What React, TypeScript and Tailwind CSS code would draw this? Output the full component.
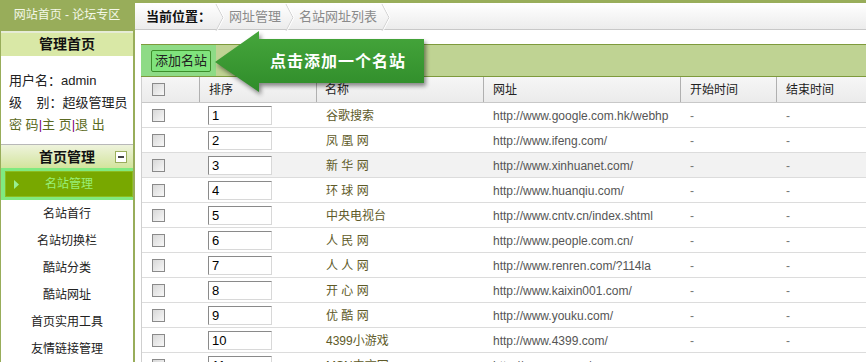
const sites = [
  { id: "1", name: "谷歌搜索", url: "http://www.google.com.hk/webhp" },
  { id: "2", name: "凤 凰 网", url: "http://www.ifeng.com/" },
  { id: "3", name: "新 华 网", url: "http://www.xinhuanet.com/" },
  { id: "4", name: "环 球 网", url: "http://www.huanqiu.com/" },
  { id: "5", name: "中央电视台", url: "http://www.cntv.cn/index.shtml" },
  { id: "6", name: "人 民 网", url: "http://www.people.com.cn/" },
  { id: "7", name: "人 人 网", url: "http://www.renren.com/?114la" },
  { id: "8", name: "开 心 网", url: "http://www.kaixin001.com/" },
  { id: "9", name: "优 酷 网", url: "http://www.youku.com/" },
  { id: "10", name: "4399小游戏", url: "http://www.4399.com/" },
  { id: "11", name: "MSN中文网", url: "http://cn.msn.com/" },
];

const menu = ["名站首行", "名站切换栏", "酷站分类", "酷站网址", "首页实用工具", "友情链接管理"];

const Chevron = () => (
  <svg width="10" height="27" viewBox="0 0 10 27" className="mx-[4px] shrink-0">
    <polyline points="1,0 8,13.5 1,27" fill="none" stroke="#d0d0d0" strokeWidth="1" />
    <polyline points="2,0 9,13.5 2,27" fill="none" stroke="#ffffff" strokeWidth="1" />
  </svg>
);

const Checkbox = () => (
  <span className="block w-[13px] h-[13px] border border-[#8a8a8a] bg-linear-to-br from-[#d8d8d8] to-[#f8f8f8]" />
);

const Sidebar = () => (
  <div className="w-[135px] shrink-0 border-r-2 border-l border-[#98ad5a] flex flex-col bg-white">
    <div className="h-[31px] bg-[#98ad5a] text-[#f4f8e8] text-[12px] leading-[31px] text-center">
      网站首页 - 论坛专区
    </div>
    <div className="h-[2px] bg-[#e6ecd6]" />
    <div className="h-[23px] bg-[#d9e8a6] text-[14px] font-bold text-[#111] leading-[23px] text-center">
      管理首页
    </div>
    <div className="pl-[8px] pt-[14px] h-[88px] text-[13px] leading-[22px] text-[#222]">
      <div>用户名：admin</div>
      <div>级&nbsp;&nbsp;&nbsp;&nbsp;别：超级管理员</div>
      <div className="text-[#5b6a22]">
        密 码<span className="text-[#800080]">|</span>主 页<span className="text-[#800080]">|</span>退 出
      </div>
    </div>
    <div className="border-t border-[#b8b8b8] h-[24px] bg-linear-to-b from-[#eef3dc] to-[#d3e49c] relative flex items-center justify-center">
      <span className="text-[14px] font-bold text-[#111] leading-none">首页管理</span>
      <span className="absolute right-[6px] top-[6px] w-[12px] h-[12px] bg-white border border-[#9aae5c] flex items-center justify-center">
        <span className="block w-[6px] h-[2px] bg-[#444]" />
      </span>
    </div>
    <div className="h-[32px] bg-[#80ea80] pt-[3px] pb-[3px] pl-[4px]">
      <div className="h-full bg-[#78a800] border border-[#8cbc20] flex items-center relative">
        <svg width="5" height="9" viewBox="0 0 5 9" className="absolute left-[8px] top-[8px]">
          <polygon points="0,0 5,4.5 0,9" fill="#98f090" />
        </svg>
        <span className="w-full text-center text-[12px] text-[#98f078]">名站管理</span>
      </div>
    </div>
    {menu.map((item) => (
      <div key={item} className="h-[27px] flex items-center justify-center text-[12px] text-[#222]">
        {item}
      </div>
    ))}
  </div>
);

const App = () => {
  return (
    <div
      className="relative w-[866px] h-[362px] overflow-hidden flex bg-white"
      style={{ fontFamily: '"Liberation Sans", "Noto Sans CJK SC", sans-serif' }}
    >
      <Sidebar />
      <div className="flex-1 min-w-0 flex flex-col">
        {/* breadcrumb */}
        <div className="h-[30px] border-t-[3px] border-[#98ad5a] border-b border-b-[#c8c8c8] bg-linear-to-b from-white to-[#ececec] flex items-center pl-[11px] text-[13px] pt-[2px]">
          <span className="font-bold text-[#111]">当前位置：</span>
          <Chevron />
          <span className="text-[#8a8a8a]">网址管理</span>
          <Chevron />
          <span className="text-[#8a8a8a]">名站网址列表</span>
          <Chevron />
        </div>

        <div className="pl-[6px] pt-[14px] flex flex-col">
          {/* toolbar */}
          <div className="h-[33px] border-y border-[#7e9a3c] bg-[#bfd393] flex">
            <div className="w-[75px] bg-[#8edb86] flex items-center pl-[10px]">
              <button className="h-[22px] px-[3px] bg-[#80e47c] border border-[#3d8f2b] rounded-[2px] text-[13px] text-[#222] leading-none">
                添加名站
              </button>
            </div>
          </div>

          {/* table */}
          <div className="border-l border-[#cfcfcf] text-[12px]">
            <div className="grid grid-cols-[58px_117px_167px_197px_96px_1fr] h-[26px] bg-linear-to-b from-[#f6f6f6] to-[#ebebeb] border-b border-[#c8c8c8] text-[#222]">
              <div className="flex items-center pl-[10px] border-r border-[#b0b0b0]">
                <Checkbox />
              </div>
              <div className="flex items-center pl-[9px] border-r border-[#b0b0b0]">排序</div>
              <div className="flex items-center pl-[8px] border-r border-[#b0b0b0]">名称</div>
              <div className="flex items-center pl-[9px] border-r border-[#b0b0b0]">网址</div>
              <div className="flex items-center pl-[9px] border-r border-[#b0b0b0]">开始时间</div>
              <div className="flex items-center pl-[9px]">结束时间</div>
            </div>
            {sites.map((site, i) => (
              <div
                key={site.id}
                className={`grid grid-cols-[58px_117px_167px_197px_96px_1fr] h-[25px] border-b border-[#dcdcdc] ${
                  i === 2 ? "bg-[#f2f2f2]" : "bg-white"
                }`}
              >
                <div className="flex items-center pl-[10px] pt-[1px]">
                  <Checkbox />
                </div>
                <div className="flex items-center pl-[8px] pt-[1px]">
                  <input
                    readOnly
                    value={site.id}
                    className="w-[64px] h-[19px] border border-t-[#8a8a8a] border-l-[#8a8a8a] border-r-[#d8d8d8] border-b-[#d8d8d8] bg-white px-[3px] text-[13px] text-black outline-none"
                  />
                </div>
                <div className="flex items-center pl-[9px] pt-[2px] text-[#5e5a28]">{site.name}</div>
                <div className="flex items-center pl-[9px] pt-[2px] text-[#555]">{site.url}</div>
                <div className="flex items-center pl-[9px] pt-[2px] text-[#777]">-</div>
                <div className="flex items-center pl-[9px] pt-[2px] text-[#777]">-</div>
              </div>
            ))}
          </div>
        </div>
      </div>

      {/* callout arrow */}
      <div className="absolute left-[212px] top-[28px] w-[220px] h-[70px]">
        <svg
          width="220"
          height="70"
          viewBox="0 0 220 70"
          className="absolute inset-0 drop-shadow-[2px_3px_2px_rgba(0,0,0,0.45)]"
        >
          <defs>
            <linearGradient id="arrowFill" x1="0" y1="0" x2="0" y2="1">
              <stop offset="0" stopColor="#46a63c" />
              <stop offset="1" stopColor="#2f8c2a" />
            </linearGradient>
          </defs>
          <polygon points="3,34 47,3 47,11 212,11 212,55 47,55 47,64" fill="url(#arrowFill)" />
        </svg>
        <span className="absolute left-[58px] top-[23px] text-[16px] leading-[22px] font-bold text-white tracking-[1px]">
          点击添加一个名站
        </span>
      </div>
    </div>
  );
};

export default App;
